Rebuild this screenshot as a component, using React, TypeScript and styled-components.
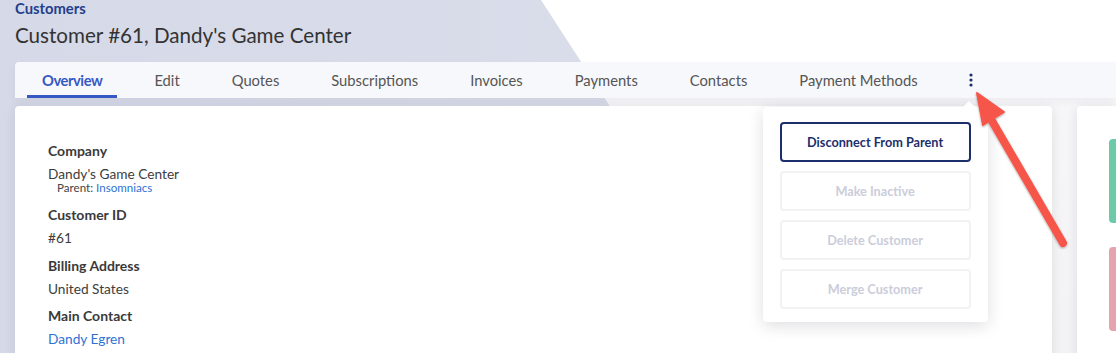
import React from "react";
import styled, { createGlobalStyle } from "styled-components";

const Global = createGlobalStyle`
  html, body { margin: 0; padding: 0; }
  body {
    font-family: "Lato", "Open Sans", sans-serif;
    background: #f4f4f6;
    overflow: hidden;
  }
`;

const Page = styled.div`
  position: relative;
  width: 1116px;
  height: 353px;
  overflow: hidden;
  background: linear-gradient(180deg, #ffffff 0px, #ffffff 60px, #f6f6f8 110px, #f3f3f5 353px);
  &::before {
    content: "";
    position: absolute;
    inset: 0;
    background: linear-gradient(90deg, #d6d9e7 0%, #dcdfeb 100%);
    clip-path: polygon(0 0, 541px 0, 770px 353px, 0 353px);
    z-index: 0;
  }
`;

const Header = styled.header`
  position: relative;
  z-index: 2;
  padding: 0 0 0 15px;
`;

const Breadcrumb = styled.div`
  font-size: 14.8px;
  font-weight: 700;
  color: #233f8c;
  line-height: 17px;
`;

const Title = styled.h1`
  margin: 5px 0 0 0;
  font-size: 20.6px;
  font-weight: 400;
  color: #333;
  line-height: 26px;
`;

const TabBar = styled.nav`
  position: relative;
  margin-top: 14px;
  height: 36px;
  background: #f7f8fb;
  border-top-left-radius: 4px;
  display: flex;
  align-items: stretch;
  gap: 22px;
  padding-left: 12px;
  box-shadow: 0 4px 8px rgba(40, 40, 60, 0.05);
`;

const Tab = styled.div<{ $active?: boolean }>`
  display: flex;
  align-items: center;
  padding: 2px 15px 0 15px;
  font-size: 14.75px;
  color: ${(p) => (p.$active ? "#3658c4" : "#555")};
  font-weight: ${(p) => (p.$active ? 700 : 400)};
  letter-spacing: ${(p) => (p.$active ? "-0.45px" : "0")};
  border-bottom: 3px solid ${(p) => (p.$active ? "#3658c4" : "transparent")};
  box-sizing: border-box;
  white-space: nowrap;
`;

const Kebab = styled.div`
  position: relative;
  display: flex;
  align-items: center;
  padding: 0 15px 0 14px;
`;

const Menu = styled.div`
  position: absolute;
  top: 45px;
  right: 0;
  width: 225px;
  box-sizing: border-box;
  background: #fff;
  border-radius: 4px;
  box-shadow: 0 4px 16px rgba(30, 30, 50, 0.14);
  padding: 15px 17px 13px 17px;
  display: flex;
  flex-direction: column;
  gap: 9px;
  z-index: 5;
  &::before {
    content: "";
    position: absolute;
    top: -6px;
    right: 13px;
    border-left: 6px solid transparent;
    border-right: 6px solid transparent;
    border-bottom: 6px solid #fff;
  }
`;

const MenuButton = styled.button<{ $primary?: boolean }>`
  height: 40px;
  box-sizing: border-box;
  background: #fff;
  border-radius: 4px;
  border: ${(p) => (p.$primary ? "2px solid #1c2f6c" : "2px solid #f2f2f4")};
  color: ${(p) => (p.$primary ? "#1c2f6c" : "#cbcdda")};
  font-family: "Lato", sans-serif;
  font-weight: 700;
  font-size: 12.7px;
  cursor: pointer;
`;

const Content = styled.main`
  position: relative;
  z-index: 1;
  display: flex;
  gap: 25px;
  margin-top: 8px;
  padding-left: 15px;
`;

const MainCard = styled.section`
  width: 1037px;
  height: 260px;
  flex-shrink: 0;
  background: #fff;
  border-radius: 4px;
  box-shadow: 0 2px 12px rgba(30, 30, 60, 0.1);
  padding: 37px 33px 0 33px;
  box-sizing: border-box;
`;

const SideCard = styled.section`
  flex: 1;
  height: 260px;
  background: #fff;
  border-radius: 4px 0 0 4px;
  box-shadow: 0 2px 12px rgba(30, 30, 60, 0.1);
  padding: 33px 0 0 32px;
  box-sizing: border-box;
  display: flex;
  flex-direction: column;
  gap: 24px;
`;

const StatBar = styled.div<{ $color: string }>`
  height: 84px;
  background: ${(p) => p.$color};
  border-radius: 4px 0 0 4px;
`;

const Label = styled.div`
  font-size: 14px;
  font-weight: 700;
  color: #3a3a3a;
  line-height: 16px;
  margin-bottom: 7px;
`;

const Value = styled.div`
  font-size: 13.7px;
  color: #3d3d3d;
  line-height: 16px;
  margin-bottom: 11.5px;
`;

const Sub = styled.div`
  font-size: 11.6px;
  color: #444;
  line-height: 12px;
  margin: -12px 0 13.5px 9px;
`;

const Link = styled.a`
  color: #2f72d4;
  text-decoration: none;
`;

const Arrow = styled.svg`
  position: absolute;
  left: 960px;
  top: 80px;
  z-index: 10;
  overflow: visible;
`;

export default function App() {
  return (
    <>
      <Global />
      <Page>
        <Header>
          <Breadcrumb>Customers</Breadcrumb>
          <Title>Customer #61, Dandy's Game Center</Title>
          <TabBar>
            <Tab $active>Overview</Tab>
            <Tab>Edit</Tab>
            <Tab>Quotes</Tab>
            <Tab>Subscriptions</Tab>
            <Tab>Invoices</Tab>
            <Tab>Payments</Tab>
            <Tab>Contacts</Tab>
            <Tab>Payment Methods</Tab>
            <Kebab>
              <svg width="4" height="14" viewBox="0 0 4 14">
                <circle cx="2" cy="2" r="1.6" fill="#1c2f6c" />
                <circle cx="2" cy="7" r="1.6" fill="#1c2f6c" />
                <circle cx="2" cy="12" r="1.6" fill="#1c2f6c" />
              </svg>
              <Menu>
                <MenuButton $primary>Disconnect From Parent</MenuButton>
                <MenuButton>Make Inactive</MenuButton>
                <MenuButton>Delete Customer</MenuButton>
                <MenuButton>Merge Customer</MenuButton>
              </Menu>
            </Kebab>
          </TabBar>
        </Header>
        <Content>
          <MainCard>
            <Label>Company</Label>
            <Value>Dandy's Game Center</Value>
            <Sub>
              Parent: <Link>Insomniacs</Link>
            </Sub>
            <Label>Customer ID</Label>
            <Value>#61</Value>
            <Label>Billing Address</Label>
            <Value>United States</Value>
            <Label>Main Contact</Label>
            <Value>
              <Link>Dandy Egren</Link>
            </Value>
          </MainCard>
          <SideCard>
            <StatBar $color="#6ccaa9" />
            <StatBar $color="#e5a2af" />
          </SideCard>
        </Content>
        <Arrow width="120" height="180" viewBox="0 0 120 180">
          <defs>
            <filter id="sh" x="-20%" y="-20%" width="140%" height="140%">
              <feDropShadow dx="0" dy="1" stdDeviation="1.2" floodColor="#000" floodOpacity="0.35" />
            </filter>
          </defs>
          <g filter="url(#sh)" fill="#f5574a" stroke="#f5574a">
            <line x1="103" y1="163" x2="28" y2="34" strokeWidth="8" strokeLinecap="round" />
            <polygon points="17,13 44,32 23,45" strokeWidth="2" strokeLinejoin="round" />
          </g>
        </Arrow>
      </Page>
    </>
  );
}
